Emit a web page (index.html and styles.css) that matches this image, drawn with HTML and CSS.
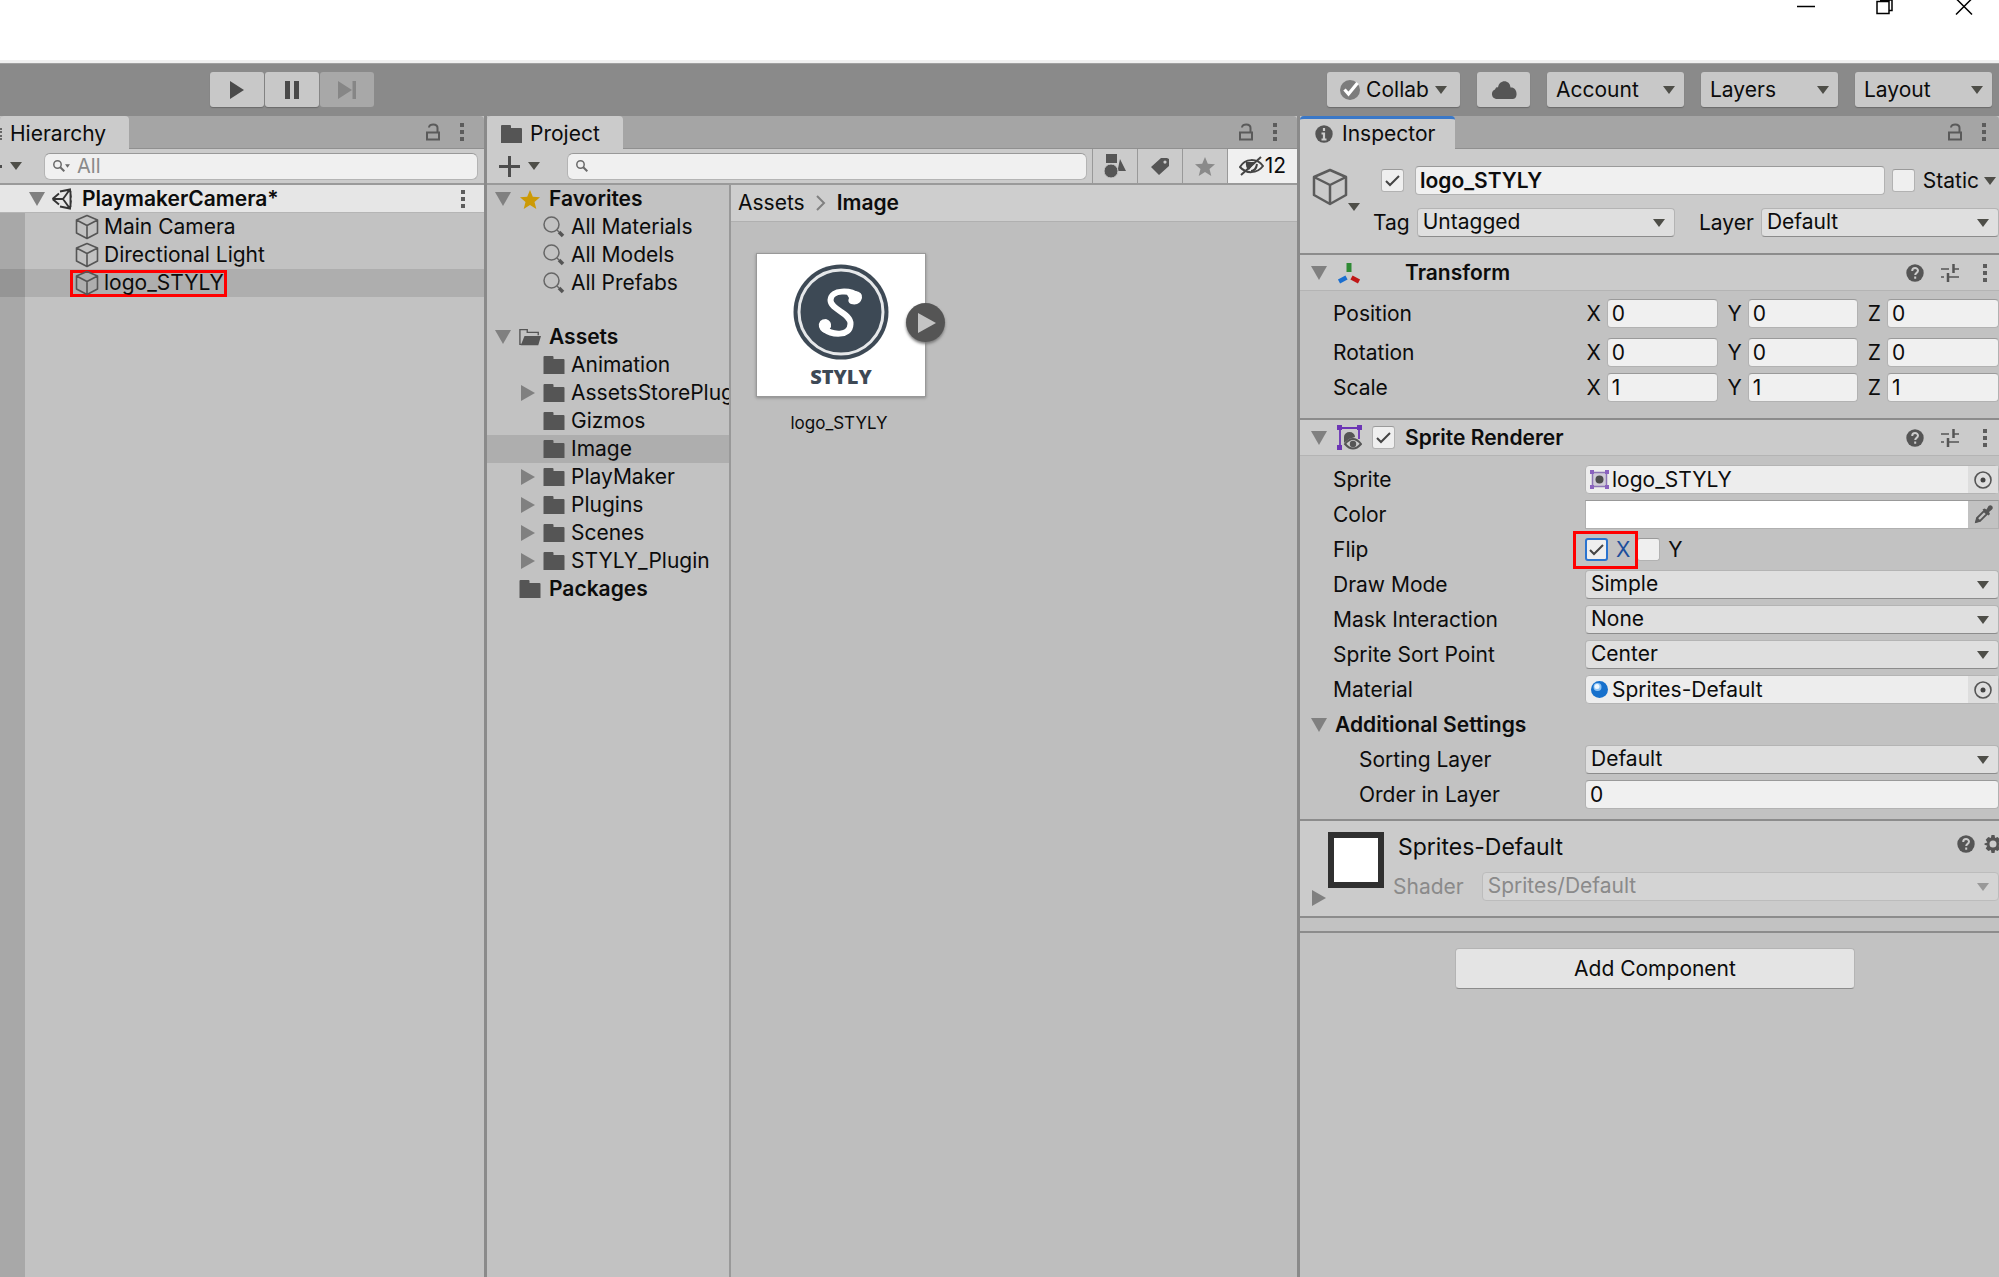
FILE: index.html
```html
<!DOCTYPE html>
<html lang="en">
<head>
<meta charset="utf-8">
<title>PlaymakerCamera - Unity</title>
<link rel="stylesheet" href="styles.css">
</head>
<body>
<svg class="defs" aria-hidden="true">
  <symbol id="down" viewBox="0 0 12 8"><path d="M0 0h12L6 8z" fill="currentColor"/></symbol>
  <symbol id="fold" viewBox="0 0 16 14"><path d="M0 0h16L8 14z" fill="#808080"/></symbol>
  <symbol id="shut" viewBox="0 0 14 16"><path d="M0 0v16L14 8z" fill="#808080"/></symbol>
  <symbol id="lock" viewBox="0 0 14 18"><path d="M1 9.500h12v7H1zM3 4.500C3 .5 11.500 0 11.500 5v4" fill="none" stroke="#5a5a5a" stroke-width="2"/></symbol>
  <symbol id="dots" viewBox="0 0 4 18"><path d="M0 0h4v4H0zM0 7h4v4H0zM0 14h4v4H0z" fill="#5c5c5c"/></symbol>
  <symbol id="cube" viewBox="0 0 24 26"><path d="M12 1.500L22.500 6v13L12 24.500 1.500 19V6zM1.500 6L12 11.500 22.500 6M12 11.500v13" fill="none" stroke="#555" stroke-width="1.600" stroke-linejoin="round"/></symbol>
  <symbol id="folder" viewBox="0 0 21 18"><path d="M0 1q0-1 1-1h8q1 0 1 1v2h10q1 0 1 1v14H0z" fill="#555"/></symbol>
  <symbol id="folder-open" viewBox="0 0 24 18"><path d="M3 17H1V1h8v3h12v3" fill="none" stroke="#555" stroke-width="1.500"/><path d="M6 8h18l-3 10H2z" fill="#555"/></symbol>
  <symbol id="find" viewBox="0 0 22 22"><circle cx="8.500" cy="8.500" r="7.500" fill="none" stroke="#666" stroke-width="1.500"/><path d="M14 14l2 2" stroke="#666" stroke-width="1.500"/><path d="M16 16l4 4" stroke="#555" stroke-width="3.500"/></symbol>
  <symbol id="star" viewBox="0 0 20 19"><path d="M10 0l2.800 6.700 7.200.5-5.500 4.700 1.800 7.100-6.300-3.900L3.700 19l1.800-7.100L0 7.200l7.200-.5z" fill="currentColor"/></symbol>
  <symbol id="lens" viewBox="0 0 12 12"><circle cx="4.500" cy="4.500" r="3.700" fill="none" stroke="#6a6a6a" stroke-width="1.500"/><path d="M7.300 7.300l4 4" stroke="#6a6a6a" stroke-width="2"/></symbol>
  <symbol id="help" viewBox="0 0 18 18"><circle cx="9" cy="9" r="8.700" fill="#555"/><path d="M6.200 7c0-4 5.800-3.600 5.800-.4C12 9 9.200 8.700 9.200 11M9.200 12.600v2.200" fill="none" stroke="#ccc" stroke-width="2"/></symbol>
  <symbol id="preset" viewBox="0 0 18 18"><path d="M0 5h8M12 5h6M0 13h3M7 13h11" stroke="#555" stroke-width="1.600"/><path d="M12.500 0v9M7 9v9" stroke="#555" stroke-width="2.500"/></symbol>
  <symbol id="target" viewBox="0 0 18 18"><circle cx="9" cy="9" r="8" fill="none" stroke="#555" stroke-width="1.600"/><circle cx="9" cy="9" r="2.500" fill="#444"/></symbol>
  <symbol id="gear" viewBox="0 0 18 18"><path d="M7.500 0h3l.6 3 2.600-1 2.600 2.800-1.700 2.600 2.900 1.100v1.200l-2.900 1.100 1.700 2.600-2.600 2.600-2.600-1-.6 3h-3l-.6-3-2.600 1-2.600-2.600 1.700-2.600L.5 9.700V8.500l2.900-1.100-1.700-2.600L4.300 2l2.600 1zM9 5.500a3.500 3.500 0 100 7 3.500 3.500 0 000-7z" fill="#555" fill-rule="evenodd"/></symbol>
</svg>

<header class="titlebar">
  <button aria-label="Minimize"><svg width="18" height="16" viewBox="0 0 18 16"><path d="M0 6.500h18" stroke="#000" stroke-width="1.500"/></svg></button>
  <button aria-label="Restore"><svg width="18" height="16" viewBox="0 0 18 16"><path d="M1 1.500h12v12H1zM4 0h12v10.500h-3" fill="none" stroke="#000" stroke-width="1.500"/></svg></button>
  <button aria-label="Close"><svg width="18" height="16" viewBox="0 0 18 16"><path d="M1 14.500L17 -1.500M17 14.500L1 -1.500" stroke="#000" stroke-width="1.500"/></svg></button>
</header>

<nav class="toolbar">
  <div class="transport">
    <button aria-label="Play"><svg width="14" height="18" viewBox="0 0 14 18"><path d="M0 0v18L14 9z" fill="#4a4a4a"/></svg></button>
    <button aria-label="Pause"><svg width="14" height="18" viewBox="0 0 14 18"><path d="M0 0h5v18H0zM9 0h5v18H9z" fill="#4a4a4a"/></svg></button>
    <button aria-label="Step" disabled><svg width="18" height="18" viewBox="0 0 18 18"><path d="M0 0v18l14-9zM14.500 0H18v18h-3.500z" fill="#868686"/></svg></button>
  </div>
  <div class="menus">
    <button class="collab"><svg width="20" height="20" viewBox="0 0 20 20"><circle cx="10" cy="10" r="10" fill="#7c7c7c"/><path d="M4.500 9.500l4 4.500 9-11" fill="none" stroke="#fff" stroke-width="3.200"/></svg>Collab<svg class="arrow"><use href="#down"/></svg></button>
    <button class="cloud" aria-label="Services"><svg width="26" height="18" viewBox="0 0 26 18"><path d="M5 18a5 5 0 01-1-9.500C5 6 6 6 7 6.500 8-2 19-2 19.500 6.500 23 6 26 9 25.500 14q-.5 4-4 4z" fill="#555"/></svg></button>
    <button class="wide">Account<svg class="arrow"><use href="#down"/></svg></button>
    <button class="wide">Layers<svg class="arrow"><use href="#down"/></svg></button>
    <button class="wide">Layout<svg class="arrow"><use href="#down"/></svg></button>
  </div>
</nav>

<main class="panels">
  <section class="panel hierarchy">
    <div class="tabs">
      <h2 class="tab"><i class="grip"></i>Hierarchy</h2>
      <div class="tab-tools"><svg width="14" height="18"><use href="#lock"/></svg><svg width="4" height="18"><use href="#dots"/></svg></div>
    </div>
    <div class="bar">
      <button class="create" aria-label="Create"><i class="plus-end"></i><svg class="arrow"><use href="#down"/></svg></button>
      <label class="search"><svg width="12" height="12"><use href="#lens"/></svg><svg class="mini"><use href="#down"/></svg><input type="text" placeholder="All" aria-label="Search hierarchy"></label>
    </div>
    <div class="tree-wrap">
      <div class="row scene">
        <svg width="16" height="14"><use href="#fold"/></svg>
        <svg width="22" height="22" viewBox="0 0 22 22"><path d="M1.500 11L8 5.500M1.500 11L8 16.500M1.500 11H12M9 3.500L19 1.500l1 8M9 18.500l10 2 1-8M12 11l6.500-9M12 11l6.500 9M19.500 3v16" fill="none" stroke="#333" stroke-width="1.900"/></svg>
        <b>PlaymakerCamera*</b>
        <svg class="end" width="4" height="18"><use href="#dots"/></svg>
      </div>
      <ul class="objects">
        <li class="row"><span class="item"><svg width="24" height="26"><use href="#cube"/></svg>Main Camera</span></li>
        <li class="row"><span class="item"><svg width="24" height="26"><use href="#cube"/></svg>Directional Light</span></li>
        <li class="row selected"><span class="item marked"><svg width="24" height="26"><use href="#cube"/></svg>logo_STYLY</span></li>
      </ul>
    </div>
  </section>

  <section class="panel project">
    <div class="tabs">
      <h2 class="tab"><svg width="21" height="18"><use href="#folder"/></svg>Project</h2>
      <div class="tab-tools"><svg width="14" height="18"><use href="#lock"/></svg><svg width="4" height="18"><use href="#dots"/></svg></div>
    </div>
    <div class="bar">
      <button class="add" aria-label="Create asset"><svg width="21" height="21" viewBox="0 0 21 21"><path d="M10.500 0v21M0 10.500h21" stroke="#4d4d4d" stroke-width="3"/></svg><svg class="arrow"><use href="#down"/></svg></button>
      <label class="search"><svg width="12" height="12"><use href="#lens"/></svg><input type="text" aria-label="Search project"></label>
      <div class="filters">
        <button aria-label="Search by type"><svg width="22" height="24" viewBox="0 0 22 24"><path d="M2 0h11v9H2zM16 5l6 12h-8.500z" fill="#555"/><circle cx="7" cy="17" r="7" fill="#555" stroke="#c8c8c8" stroke-width="1"/></svg></button>
        <button aria-label="Search by label"><svg width="18" height="18" viewBox="0 0 18 18"><path d="M10 1h6l2 1v7L8 18 0 10zM14 3.500a1.600 1.600 0 100 3.200 1.600 1.600 0 000-3.200z" fill="#555" fill-rule="evenodd"/></svg></button>
        <button class="fav" aria-label="Save search"><svg width="20" height="19"><use href="#star"/></svg></button>
        <button class="hidden-count"><svg width="25" height="20" viewBox="0 0 25 20"><path d="M1 11C6 2 18 2 24 10 18 18 7 18 1 11z" fill="none" stroke="#444" stroke-width="2"/><path d="M7 6h9l-6 8q-4-3-3-8z" fill="#444"/><path d="M2 19L22 1" stroke="#444" stroke-width="2"/><path d="M12 15q5 0 6-7" fill="none" stroke="#444" stroke-width="2"/></svg>12</button>
      </div>
    </div>
    <div class="browser">
      <div class="folders">
        <ul>
          <li class="row top"><svg width="16" height="14"><use href="#fold"/></svg><svg class="gold" width="22" height="19"><use href="#star"/></svg><b>Favorites</b></li>
          <li class="row leaf"><svg width="22" height="22"><use href="#find"/></svg>All Materials</li>
          <li class="row leaf"><svg width="22" height="22"><use href="#find"/></svg>All Models</li>
          <li class="row leaf"><svg width="22" height="22"><use href="#find"/></svg>All Prefabs</li>
        </ul>
        <ul>
          <li class="row top"><svg width="16" height="14"><use href="#fold"/></svg><svg width="22" height="18"><use href="#folder-open"/></svg><b>Assets</b></li>
          <li class="row leaf"><svg width="22" height="18"><use href="#folder"/></svg>Animation</li>
          <li class="row branch"><svg width="14" height="16"><use href="#shut"/></svg><svg width="22" height="18"><use href="#folder"/></svg>AssetsStorePlugins</li>
          <li class="row leaf"><svg width="22" height="18"><use href="#folder"/></svg>Gizmos</li>
          <li class="row leaf selected"><svg width="22" height="18"><use href="#folder"/></svg>Image</li>
          <li class="row branch"><svg width="14" height="16"><use href="#shut"/></svg><svg width="22" height="18"><use href="#folder"/></svg>PlayMaker</li>
          <li class="row branch"><svg width="14" height="16"><use href="#shut"/></svg><svg width="22" height="18"><use href="#folder"/></svg>Plugins</li>
          <li class="row branch"><svg width="14" height="16"><use href="#shut"/></svg><svg width="22" height="18"><use href="#folder"/></svg>Scenes</li>
          <li class="row branch"><svg width="14" height="16"><use href="#shut"/></svg><svg width="22" height="18"><use href="#folder"/></svg>STYLY_Plugin</li>
          <li class="row root"><svg width="22" height="18"><use href="#folder"/></svg><b>Packages</b></li>
        </ul>
      </div>
      <div class="contents">
        <div class="crumbs"><a href="#">Assets</a><svg width="10" height="16" viewBox="0 0 10 16"><path d="M1 1l7 7-7 7" fill="none" stroke="#808080" stroke-width="2"/></svg><b>Image</b></div>
        <figure class="asset">
          <div class="thumb">
            <svg width="96" height="96" viewBox="0 0 96 96"><circle cx="48" cy="48" r="47.500" fill="#3d4955"/><circle cx="48" cy="48" r="42" fill="none" stroke="#e6e8ea" stroke-width="3"/><path d="M65 32C58 26 38 25 37.500 36 37.500 46 58 49 57.500 60 57 73 39 71 31 65" fill="none" stroke="#fff" stroke-width="6"/><path d="M53 29q3-2 9-2 8 1 7 7-2 8-11 6-4-2-2-6zM33 55q-8 0-7 8 2 6 8 6l4-6q1-6-5-8z" fill="#fff"/></svg>
            <span class="brand">STYLY</span>
            <button class="expand" aria-label="Expand"><svg width="18" height="20" viewBox="0 0 18 20"><path d="M0 0v20l18-10z" fill="#c4c4c4"/></svg></button>
          </div>
          <figcaption>logo_STYLY</figcaption>
        </figure>
      </div>
    </div>
  </section>

  <section class="panel inspector">
    <div class="tabs">
      <h2 class="tab active"><svg width="18" height="18" viewBox="0 0 18 18"><circle cx="9" cy="9" r="8.700" fill="#555"/><path d="M9 3v3M9 7.500V15M6.500 8.500H9M6.500 14.500h5" stroke="#ccc" stroke-width="2.200"/></svg>Inspector</h2>
      <div class="tab-tools"><svg width="14" height="18"><use href="#lock"/></svg><svg width="4" height="18"><use href="#dots"/></svg></div>
    </div>

    <div class="object-head">
      <button class="object-icon" aria-label="Select icon"><svg width="36" height="38" viewBox="0 0 36 38"><path d="M18 2l16 7v18L18 36 2 27V9zM2 9l16 8 16-8M18 17v19" fill="none" stroke="#5c5c5c" stroke-width="2.500" stroke-linejoin="round"/></svg><svg class="arrow"><use href="#down"/></svg></button>
      <div class="object-fields">
        <div class="name-line">
          <input type="checkbox" checked aria-label="Active">
          <input class="field name" type="text" value="logo_STYLY" aria-label="Name">
          <label class="static"><input type="checkbox">Static</label>
          <svg class="arrow"><use href="#down"/></svg>
        </div>
        <div class="tag-line">
          <label for="tag">Tag</label>
          <div class="select tag"><select id="tag"><option>Untagged</option></select><svg class="arrow"><use href="#down"/></svg></div>
          <label class="layer-label" for="layer">Layer</label>
          <div class="select layer"><select id="layer"><option>Default</option></select><svg class="arrow"><use href="#down"/></svg></div>
        </div>
      </div>
    </div>

    <div class="comp-head">
      <svg width="16" height="14"><use href="#fold"/></svg>
      <svg width="24" height="24" viewBox="0 0 24 24"><path d="M12 2v9" stroke="#2f8a34" stroke-width="5"/><path d="M2 20.500L9.500 16.500" stroke="#1b6fd0" stroke-width="4.500"/><path d="M14.500 16.500l7.500 4" stroke="#c01616" stroke-width="4.500"/></svg>
      <h3>Transform</h3>
      <div class="comp-tools"><svg width="18" height="18"><use href="#help"/></svg><svg width="18" height="18"><use href="#preset"/></svg><svg width="18" height="18"><use href="#dots"/></svg></div>
    </div>
    <div class="vectors">
      <div class="vector first"><span>Position</span><label>X<input class="field" type="text" value="0"></label><label>Y<input class="field" type="text" value="0"></label><label>Z<input class="field" type="text" value="0"></label></div>
      <div class="vector"><span>Rotation</span><label>X<input class="field" type="text" value="0"></label><label>Y<input class="field" type="text" value="0"></label><label>Z<input class="field" type="text" value="0"></label></div>
      <div class="vector"><span>Scale</span><label>X<input class="field" type="text" value="1"></label><label>Y<input class="field" type="text" value="1"></label><label>Z<input class="field" type="text" value="1"></label></div>
    </div>

    <div class="comp-head">
      <svg width="16" height="14"><use href="#fold"/></svg>
      <svg width="25" height="26" viewBox="0 0 25 26"><path d="M3 3h19v11M3 3v19" fill="none" stroke="#6c35b5" stroke-width="1.800"/><path d="M0 0h5v5H0zM20 0h5v5h-5zM0 20h5v5H0z" fill="#6c35b5"/><path d="M7 12a5.500 5 0 0111 0l-6 2-5 4z" fill="#555"/><path d="M8 19q8-10 16 0-8 9-16 0z" fill="#ccc" stroke="#555" stroke-width="2"/><circle cx="16" cy="19" r="3.200" fill="#555"/></svg>
      <input type="checkbox" checked aria-label="Enable Sprite Renderer">
      <h3>Sprite Renderer</h3>
      <div class="comp-tools"><svg width="18" height="18"><use href="#help"/></svg><svg width="18" height="18"><use href="#preset"/></svg><svg width="18" height="18"><use href="#dots"/></svg></div>
    </div>
    <div class="props">
      <div class="prop"><span>Sprite</span><div class="object-field"><svg width="19" height="19" viewBox="0 0 19 19"><path d="M2.500 2.500h14v14h-14z" fill="#d0cbd8" stroke="#8d76b5" stroke-width="1.500"/><path d="M0 0h4v4H0zM15 0h4v4h-4zM0 15h4v4H0zM15 15h4v4h-4z" fill="#8b62c0"/><circle cx="9.500" cy="9.500" r="4" fill="#4c4c4c"/></svg><output>logo_STYLY</output><button aria-label="Pick sprite"><svg width="18" height="18"><use href="#target"/></svg></button></div></div>
      <div class="prop"><span>Color</span><div class="color-field"><button class="swatch" aria-label="Color"></button><button class="dropper" aria-label="Pick color"><svg width="19" height="19" viewBox="0 0 19 19"><path d="M2 17l1-4 7-7 3 3-7 7z" fill="#c4c4c4" stroke="#555" stroke-width="1.800"/><path d="M1 18l2-6 4 4z" fill="#555"/><path d="M8.500 4.500l2-1 2 1 2-3.500q2-1.500 3.500 0t0 3.500L15 7l1 2-1.500 1.500z" fill="#555"/></svg></button></div></div>
      <div class="prop"><span>Flip</span><div class="flips"><label class="flip marked"><input class="focused" type="checkbox" checked>X</label><label class="flip"><input type="checkbox">Y</label></div></div>
      <div class="prop"><label for="draw">Draw Mode</label><div class="select"><select id="draw"><option>Simple</option></select><svg class="arrow"><use href="#down"/></svg></div></div>
      <div class="prop"><label for="mask">Mask Interaction</label><div class="select"><select id="mask"><option>None</option></select><svg class="arrow"><use href="#down"/></svg></div></div>
      <div class="prop"><label for="sort">Sprite Sort Point</label><div class="select"><select id="sort"><option>Center</option></select><svg class="arrow"><use href="#down"/></svg></div></div>
      <div class="prop"><span>Material</span><div class="object-field"><svg width="19" height="19" viewBox="0 0 19 19"><circle cx="9.500" cy="9.500" r="8.500" fill="#1670cc"/><circle cx="7.500" cy="7" r="4" fill="#8dc4f5"/><circle cx="7" cy="6.500" r="2.500" fill="#eef7ff"/></svg><output>Sprites-Default</output><button aria-label="Pick material"><svg width="18" height="18"><use href="#target"/></svg></button></div></div>
      <div class="prop group"><svg width="16" height="14"><use href="#fold"/></svg><h3>Additional Settings</h3></div>
      <div class="prop sub"><label for="slayer">Sorting Layer</label><div class="select"><select id="slayer"><option>Default</option></select><svg class="arrow"><use href="#down"/></svg></div></div>
      <div class="prop sub"><label for="order">Order in Layer</label><input class="field" id="order" type="text" value="0"></div>
    </div>

    <div class="material">
      <svg class="shut" width="14" height="16"><use href="#shut"/></svg>
      <div class="preview"></div>
      <div class="material-info">
        <div class="material-title">Sprites-Default<span class="material-tools"><svg width="18" height="18"><use href="#help"/></svg><svg width="18" height="18"><use href="#gear"/></svg></span></div>
        <div class="shader"><label for="shader">Shader</label><div class="select off"><select id="shader" disabled><option>Sprites/Default</option></select><svg class="arrow"><use href="#down"/></svg></div></div>
      </div>
    </div>
    <div class="spacer"></div>
    <button class="add-component">Add Component</button>
  </section>
</main>
</body>
</html>
```
FILE: styles.css
```css
* { box-sizing: border-box; }
body {
  margin: 0;
  min-height: 100vh;
  display: flex;
  flex-direction: column;
  font: 21px/28px Inter, "Liberation Sans", sans-serif;
  color: #0c0c0c;
  background: #fff;
}
h2, h3, ul, figure { margin: 0; padding: 0; }
h2, h3 { font-size: inherit; }
h2 { font-weight: 400; }
h3, b { font-weight: 600; }
ul { list-style: none; }
svg { flex: none; display: block; }
.defs { display: none; }
button, input, select { font: inherit; color: inherit; margin: 0; padding: 0; border: 0; background: none; border-radius: 0; }
button { display: flex; align-items: center; justify-content: center; }
.arrow { width: 12px; height: 8px; color: #4e4e48; }

/* window chrome */
.titlebar { height: 63px; border-bottom: 3px solid #f0f0f0; display: flex; justify-content: flex-end; align-items: flex-start; gap: 61px; padding-right: 26px; }
.toolbar { height: 53px; background: #8a8a8a; border-top: 1px solid #a0a0a0; padding: 8px 7px 8px 210px; display: flex; justify-content: space-between; }
.transport { display: flex; gap: 1px; }
.transport button, .menus button { height: 35px; background: #c8c8c8; border-radius: 3px; box-shadow: 0 1px 1px #6a6a6a; }
.transport button { width: 54px; }
.transport button:disabled { background: #a8a8a8; box-shadow: none; }
.menus { display: flex; gap: 17px; }
.menus .collab { width: 133px; gap: 6px; }
.menus .cloud { width: 53px; }
.menus .wide { width: 137px; padding: 0 9px; justify-content: space-between; }

/* panels */
.panels { flex: 1; display: grid; grid-template-columns: minmax(0, 487fr) minmax(0, 813fr) minmax(0, 699fr); background: #c2c2c2; }
.panel { display: flex; flex-direction: column; }
.hierarchy, .project { border-right: 3px solid #8a8a8a; }
.tabs { height: 33px; background: #a5a5a5; border-bottom: 1px solid #909090; border-radius: 4px 4px 0 0; display: flex; justify-content: space-between; }
.tab { height: 33px; background: #cbcbcb; border-radius: 4px 4px 0 0; padding: 2px 23px 0 0; display: flex; align-items: center; gap: 8px; }
.grip { width: 2px; height: 12px; border: dotted #666; border-width: 0 2px 0 0; }
.project .tab { padding-left: 14px; }
.inspector .tab { flex: none; padding: 0 20px 0 15px; border-top: 3px solid #3a78c8; gap: 9px; }
.tab-tools { display: flex; align-items: center; gap: 20px; padding-right: 20px; }
.inspector .tab-tools { padding-right: 13px; }
.bar { height: 36px; background: #cbcbcb; border-bottom: 2px solid #9a9a9a; display: flex; align-items: center; }
.create { width: 44px; gap: 8px; justify-content: flex-start; }
.plus-end { width: 2px; height: 3px; background: #4d4d4d; }
.hierarchy .search { margin-right: 6px; }
.search { flex: 1; height: 27px; background: #f0f0f0; border: 1px solid #b4b4b4; border-top-color: #999; border-radius: 6px; display: flex; align-items: center; padding-left: 8px; }
.search input { flex: 1; min-width: 0; padding-left: 7px; outline: 0; font-size: 20px; }
.search input::placeholder { color: #8a8a8a; opacity: 1; }
.mini { width: 5px; height: 4px; color: #6a6a6a; }
.row { height: 28px; display: flex; align-items: center; white-space: nowrap; }
.selected { background: #aeaeae; }

/* hierarchy */
.tree-wrap { flex: 1; display: flex; flex-direction: column; }
.scene { background: #e6e6e6; border-bottom: 1px solid #b5b5b5; padding: 0 19px 0 29px; gap: 6px; }
.scene b { padding-left: 3px; }
.end { margin-left: auto; }
.objects { flex: 1; background: linear-gradient(to right, #a8a8a8 25px, #c2c2c2 25px); }
.objects .row { padding-left: 70px; }
.objects .selected { background: linear-gradient(to right, #959595 25px, #aeaeae 25px); }
.item { height: 27px; border: 3px solid transparent; padding: 0 0 0 2px; display: flex; align-items: center; gap: 5px; }
.item.marked { border-color: #f00; }

/* project */
.add { width: 80px; padding-left: 12px; gap: 8px; justify-content: flex-start; }
.filters { display: flex; height: 34px; margin-left: 5px; }
.filters button { width: 45px; border-left: 1px solid #999; }
.filters .fav { color: #8a8a8a; }
.filters .hidden-count { width: 70px; background: #f0f0f0; gap: 1px; }
.browser { flex: 1; display: grid; grid-template-columns: minmax(0, 244fr) minmax(0, 566fr); }
.folders { border-right: 2px solid #999; overflow: hidden; }
.folders ul + ul { margin-top: 26px; }
.top { padding-left: 8px; gap: 8px; }
.root { padding-left: 32px; gap: 8px; }
.leaf { padding-left: 56px; gap: 6px; }
.branch { padding-left: 34px; gap: 6px; }
.branch svg:first-child { margin-right: 2px; }
.gold { color: #cc9a06; }
.contents { background: #bebebe; }
.crumbs { height: 37px; background: #cecece; border-bottom: 1px solid #b0b0b0; padding-left: 7px; display: flex; align-items: center; gap: 11px; }
.crumbs a { color: inherit; text-decoration: none; }
.asset { width: 170px; margin: 31px 25px; display: flex; flex-direction: column; align-items: center; }
.thumb { position: relative; width: 100%; height: 144px; background: #fff; border: 1px solid #999; box-shadow: 0 1px 3px #888; padding-top: 10px; display: flex; flex-direction: column; align-items: center; }
.brand { margin-top: 3px; font: 800 20px/28px "Open Sans", sans-serif; color: #3d4955; }
.expand { position: absolute; right: -20px; top: 49px; width: 39px; height: 39px; border-radius: 50%; background: #555; box-shadow: 0 2px 3px #777; padding-left: 3px; }
figcaption { font-size: 17px; margin-top: 12px; padding-right: 4px; }

/* inspector */
.inspector { overflow: hidden; }
.field { width: 100%; min-width: 0; height: 29px; padding: 0 4px; background: #f0f0f0; border: 1px solid #b2b2b2; border-top-color: #9a9a9a; border-radius: 4px; }
input[type="checkbox"] { appearance: none; flex: none; width: 23px; height: 23px; background: #efefef center / 17px 17px no-repeat; border: 1px solid #b2b2b2; border-top-color: #9a9a9a; border-radius: 3px; }
input[type="checkbox"]:checked { background-image: url("data:image/svg+xml,%3Csvg xmlns='http://www.w3.org/2000/svg' viewBox='0 0 17 17'%3E%3Cpath d='M2 9l4 4L15 4' fill='none' stroke='%23444' stroke-width='2'/%3E%3C/svg%3E"); }
input[type="checkbox"].focused { border: 2px solid #2a74d0; }
.select { display: grid; align-items: center; }
.select > * { grid-area: 1 / 1; }
.select select { appearance: none; width: 100%; height: 29px; padding: 0 5px 2px; line-height: 26px; background: #dfdfdf; border: 1px solid #b4b4b4; border-bottom-color: #8c8c8c; border-radius: 4px; }
.select .arrow { justify-self: end; margin-right: 10px; pointer-events: none; }
.object-head { height: 106px; background: #cbcbcb; border-bottom: 2px solid #8c8c8c; display: flex; padding: 17px 0 0 12px; }
.object-icon { width: 61px; height: 45px; align-items: flex-start; justify-content: flex-start; padding-top: 2px; }
.object-icon .arrow { align-self: flex-end; }
.object-fields { flex: 1; display: flex; flex-direction: column; gap: 13px; }
.name-line { display: flex; align-items: center; padding: 0 3px 0 8px; }
.name { flex: 1; margin: 0 7px 0 11px; font-weight: 600; }
.static { display: flex; align-items: center; gap: 8px; margin-right: 5px; }
.tag-line { display: flex; align-items: center; gap: 7px; }
.tag { flex: 256; }
.layer { flex: 236; }
.layer-label { margin-left: 17px; }
.comp-head { height: 36px; background: #cbcbcb; border-bottom: 1px solid #b4b4b4; display: grid; grid-template-columns: 16px 25px 23px 1fr auto; align-items: center; padding: 0 5px 0 11px; column-gap: 10px; }
.comp-head h3 { grid-column: 4; }
.comp-tools { display: flex; align-items: center; gap: 17px; }
.vectors { border-bottom: 2px solid #8c8c8c; padding: 8px 0 16px 33px; display: flex; flex-direction: column; gap: 6px; }
.vector { display: grid; grid-template-columns: minmax(0, 243fr) minmax(0, 131fr) minmax(0, 130fr) minmax(0, 131fr); column-gap: 10px; align-items: center; }
.vector.first { margin-bottom: 4px; }
.vector label { display: flex; align-items: center; gap: 6px; }
.props { padding: 9px 0 10px 33px; border-bottom: 2px solid #8c8c8c; display: flex; flex-direction: column; gap: 6px; }
.prop { height: 29px; display: grid; grid-template-columns: minmax(0, 252fr) minmax(0, 414fr); align-items: center; }
.sub > label { padding-left: 26px; }
.group { display: flex; gap: 8px; margin-left: -22px; }
.object-field { height: 29px; border: 1px solid #b4b4b4; border-radius: 4px; background: #ededed; display: flex; align-items: center; padding-left: 4px; gap: 3px; }
.object-field output { flex: 1; }
.object-field button { width: 30px; height: 27px; background: #dedede; }
.color-field { display: flex; height: 29px; border: 1px solid #b0b0b0; border-top-color: #999; }
.swatch { flex: 1; background: #fff; }
.dropper { width: 30px; }
.flips { display: flex; align-items: center; }
.flip { display: flex; align-items: center; gap: 8px; }
.flip.marked { position: relative; height: 38px; border: 3px solid #f00; padding: 0 5px 0 9px; margin: -5px -1px -5px -12px; color: #1c4f9c; }
.material { height: 97px; background: #cbcbcb; border-bottom: 2px solid #8c8c8c; display: flex; padding: 11px 0 0 12px; }
.shut { margin: 58px 2px 0 0; }
.preview { width: 56px; height: 56px; background: #fff; border: 6px solid #303030; }
.material-info { flex: 1; padding-left: 9px; }
.material-title { display: flex; justify-content: space-between; padding: 1px 0 0 5px; font-size: 23px; }
.material-tools { display: flex; align-items: center; gap: 9px; margin-right: -3px; height: 22px; }
.shader { display: flex; align-items: center; gap: 18px; margin-top: 11px; color: #8a8a8a; }
.off { flex: 1; }
.off select { background: #d4d4d4; border-color: #bcbcbc; opacity: 1; }
.off .arrow { color: #999; }
.spacer { height: 15px; border-bottom: 2px solid #8c8c8c; }
.add-component { width: 400px; max-width: 100%; height: 41px; margin: 15px auto 16px 155px; background: #e4e4e4; border: 1px solid #b4b4b4; border-bottom-color: #8c8c8c; border-radius: 4px; }
```
